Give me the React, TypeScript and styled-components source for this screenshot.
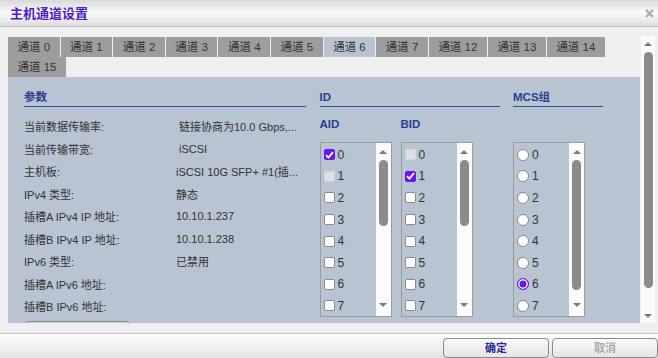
import React from "react";
import styled, { createGlobalStyle, css } from "styled-components";

const GlobalStyle = createGlobalStyle`
  html, body {
    margin: 0;
    padding: 0;
    width: 658px;
    height: 358px;
    overflow: hidden;
    background: #efefef;
  }
  body {
    font-family: "Liberation Sans", "Noto Sans CJK SC", sans-serif;
  }
`;

const Dialog = styled.div`
  width: 658px;
  height: 358px;
  display: flex;
  flex-direction: column;
  background: #efefef;
  overflow: hidden;
`;

const TitleBar = styled.div`
  flex: none;
  height: 27px;
  box-sizing: border-box;
  border-bottom: 1px solid #c3c3c3;
  background: linear-gradient(#d8d8d8, #f8f8f8 45%, #f3f3f3 65%, #dcdcdc);
  display: flex;
  align-items: center;
  justify-content: space-between;
  padding: 0 4px 0 10px;
`;

const Title = styled.div`
  font-size: 13px;
  font-weight: bold;
  color: #4a1ecb;
  padding-bottom: 1px;
`;

const Body = styled.div`
  flex: 1;
  min-height: 0;
  display: flex;
  gap: 1px;
  padding: 9px 3px 10px 8px;
`;

const Main = styled.div`
  width: 632px;
  display: flex;
  flex-direction: column;
  overflow: hidden;
`;

const Tabs = styled.div`
  display: flex;
  flex-wrap: wrap;
  margin-top: 1px;
`;

const Tab = styled.div<{ $active?: boolean }>`
  height: 20px;
  line-height: 20px;
  padding: 0 9.5px;
  margin-right: 1px;
  font-size: 11.5px;
  color: #333;
  background: ${(p) => (p.$active ? "#b8c4d2" : "#9d9d9d")};
  white-space: nowrap;
`;

const Panel = styled.div`
  flex: 1;
  min-height: 0;
  overflow: hidden;
  background: #b8c4d2;
  padding: 0 16px;
  display: grid;
  grid-template-columns: 282px 180px 90px;
  column-gap: 13.5px;
  align-items: start;
`;

const Column = styled.div`
  display: flex;
  flex-direction: column;
`;

const SectionHead = styled.div`
  margin-top: 11px;
  height: 19px;
  line-height: 18px;
  box-sizing: border-box;
  border-bottom: 1px solid #2d5193;
  font-size: 11.5px;
  font-weight: bold;
  color: #2e3b93;
`;

const ParamList = styled.div`
  margin-top: 8px;
  display: grid;
  grid-template-columns: 152px 1fr;
  grid-auto-rows: 22.5px;
  align-items: center;
  font-size: 11px;
  color: #333;
  white-space: nowrap;
`;

const Value = styled.span<{ $indent?: boolean }>`
  padding-left: ${(p) => (p.$indent ? "3px" : "0")};
  overflow: hidden;
`;

const HiddenButton = styled.div`
  margin-top: 3px;
  width: 107px;
  height: 20px;
  box-sizing: border-box;
  border: 1px solid #8d8d8d;
  border-radius: 5px;
  background: #c4ccd6;
`;

const IdGrid = styled.div`
  display: grid;
  grid-template-columns: 72px 72px;
  column-gap: 9px;
`;

const SubLabel = styled.div`
  margin-top: 8px;
  height: 18px;
  line-height: 18px;
  font-size: 11.5px;
  font-weight: bold;
  color: #2e3b93;
`;

const ListBox = styled.div`
  margin-top: 9px;
  width: 72px;
  height: 175px;
  box-sizing: border-box;
  border: 1px solid #9b9b9b;
  display: flex;
`;

const Items = styled.div`
  flex: 1;
  padding: 1px 0 0 3px;
`;

const Item = styled.div`
  height: 21.6px;
  display: flex;
  align-items: center;
  gap: 3px;
  font-size: 12px;
  color: #333;
`;

const CheckBox = styled.span<{ $state?: "checked" | "disabled" }>`
  width: 11px;
  height: 11px;
  box-sizing: border-box;
  border-radius: 2px;
  border: 1px solid #8a8a8a;
  background: #fff;
  display: inline-flex;
  align-items: center;
  justify-content: center;
  ${(p) =>
    p.$state === "checked" &&
    css`
      background: #6a14f4;
      border-color: #6a14f4;
    `}
  ${(p) =>
    p.$state === "disabled" &&
    css`
      background: #dcdfe3;
      border-color: #d3d6db;
    `}
`;

const Radio = styled.span<{ $checked?: boolean }>`
  width: 12px;
  height: 12px;
  box-sizing: border-box;
  border-radius: 50%;
  border: 1px solid #8a8a8a;
  background: #fff;
  ${(p) =>
    p.$checked &&
    css`
      border-color: #6a14f4;
      background: #6a14f4;
      box-shadow: inset 0 0 0 1.5px #fff;
    `}
`;

const Scroll = styled.div<{ $width: number }>`
  flex: none;
  width: ${(p) => p.$width}px;
  background: #fbfbfb;
  display: flex;
  flex-direction: column;
  align-items: center;
`;

const Arrow = styled.span<{ $down?: boolean; $gap: number }>`
  width: 0;
  height: 0;
  border-left: 4px solid transparent;
  border-right: 4px solid transparent;
  ${(p) =>
    p.$down
      ? css`
          border-top: 4px solid #7c7c7c;
          margin-top: auto;
          margin-bottom: ${p.$gap}px;
        `
      : css`
          border-bottom: 4px solid #7c7c7c;
          margin-top: ${p.$gap}px;
        `}
`;

const Thumb = styled.span<{ $top: number; $len: number }>`
  margin-top: ${(p) => p.$top}px;
  width: 9px;
  height: ${(p) => p.$len}px;
  border-radius: 5px;
  background: #8b8b8b;
`;

const Footer = styled.div`
  flex: none;
  height: 25px;
  box-sizing: border-box;
  border-top: 1px solid #c6c6c6;
  background: linear-gradient(#fdfdfd, #e3e3e3);
  display: flex;
  justify-content: flex-end;
  align-items: flex-start;
  gap: 3px;
  padding-top: 4px;
`;

const Button = styled.div<{ $disabled?: boolean }>`
  width: 106px;
  height: 20px;
  box-sizing: border-box;
  border: 1px solid #8b8b8b;
  border-radius: 4px;
  background: linear-gradient(#fafafa, #e4e4e4);
  text-align: center;
  line-height: 18px;
  font-size: 11px;
  font-weight: bold;
  color: ${(p) => (p.$disabled ? "#a9a9a9" : "#2d2a9c")};
`;

const tabs = ["0", "1", "2", "3", "4", "5", "6", "7", "12", "13", "14", "15"];

const params: [string, string, boolean?][] = [
  ["当前数据传输率:", "链接协商为10.0 Gbps,...", true],
  ["当前传输带宽:", "iSCSI", true],
  ["主机板:", "iSCSI 10G SFP+ #1(插..."],
  ["IPv4 类型:", "静态"],
  ["插槽A IPv4 IP 地址:", "10.10.1.237"],
  ["插槽B IPv4 IP 地址:", "10.10.1.238"],
  ["IPv6 类型:", "已禁用"],
  ["插槽A IPv6 地址:", ""],
  ["插槽B IPv6 地址:", ""],
];

const nums = [0, 1, 2, 3, 4, 5, 6, 7];

const Check = () => (
  <svg width="9" height="8" viewBox="0 0 9 8">
    <path d="M1 4.2 L3.4 6.6 L8 1.2" fill="none" stroke="#fff" strokeWidth="1.8" />
  </svg>
);

const CheckList = ({ checked, disabled }: { checked: number; disabled: number }) => (
  <ListBox>
    <Items>
      {nums.map((n) => (
        <Item key={n}>
          <CheckBox $state={n === checked ? "checked" : n === disabled ? "disabled" : undefined}>
            {n === checked && <Check />}
          </CheckBox>
          {n}
        </Item>
      ))}
    </Items>
    <Scroll $width={15}>
      <Arrow $gap={7} />
      <Thumb $top={6} $len={66} />
      <Arrow $down $gap={9} />
    </Scroll>
  </ListBox>
);

const App = () => {
  return (
    <Dialog>
      <GlobalStyle />
      <TitleBar>
        <Title>主机通道设置</Title>
        <svg width="9" height="9" viewBox="0 0 9 9">
          <path d="M1 1 L8 8 M8 1 L1 8" stroke="#acacac" strokeWidth="2.4" />
        </svg>
      </TitleBar>
      <Body>
        <Main>
          <Tabs>
            {tabs.map((t) => (
              <Tab key={t} $active={t === "6"}>
                通道 {t}
              </Tab>
            ))}
          </Tabs>
          <Panel>
            <Column>
              <SectionHead>参数</SectionHead>
              <ParamList>
                {params.map(([label, value, indent]) => (
                  <React.Fragment key={label}>
                    <span>{label}</span>
                    <Value $indent={indent}>{value}</Value>
                  </React.Fragment>
                ))}
              </ParamList>
              <HiddenButton />
            </Column>
            <Column>
              <SectionHead>ID</SectionHead>
              <IdGrid>
                <Column>
                  <SubLabel>AID</SubLabel>
                  <CheckList checked={0} disabled={1} />
                </Column>
                <Column>
                  <SubLabel>BID</SubLabel>
                  <CheckList checked={1} disabled={0} />
                </Column>
              </IdGrid>
            </Column>
            <Column>
              <SectionHead>MCS组</SectionHead>
              <SubLabel />
              <ListBox>
                <Items>
                  {nums.map((n) => (
                    <Item key={n}>
                      <Radio $checked={n === 6} />
                      {n}
                    </Item>
                  ))}
                </Items>
                <Scroll $width={15}>
                  <Arrow $gap={7} />
                  <Thumb $top={6} $len={130} />
                  <Arrow $down $gap={9} />
                </Scroll>
              </ListBox>
            </Column>
          </Panel>
        </Main>
        <Scroll $width={14}>
          <Arrow $gap={6} />
          <Thumb $top={6} $len={236} />
          <Arrow $down $gap={5} />
        </Scroll>
      </Body>
      <Footer>
        <Button>确定</Button>
        <Button $disabled>取消</Button>
      </Footer>
    </Dialog>
  );
};

export default App;
